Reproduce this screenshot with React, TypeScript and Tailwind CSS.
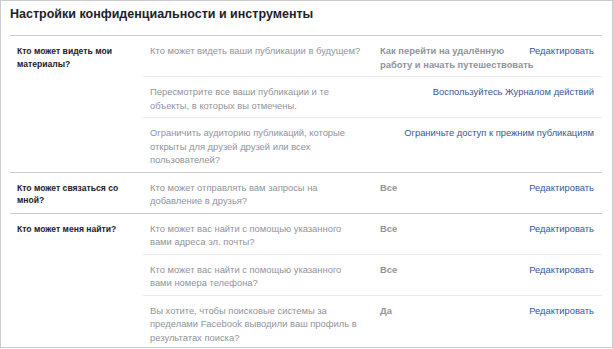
import React from "react";

type Row = {
  q: string;
  value?: string;
  link: string;
};

type Section = {
  label: string;
  rows: Row[];
};

const sections: Section[] = [
  {
    label: "Кто может видеть мои материалы?",
    rows: [
      {
        q: "Кто может видеть ваши публикации в будущем?",
        value: "Как перейти на удалённую работу и начать путешествовать",
        link: "Редактировать",
      },
      {
        q: "Пересмотрите все ваши публикации и те объекты, в которых вы отмечены.",
        link: "Воспользуйтесь Журналом действий",
      },
      {
        q: "Ограничить аудиторию публикаций, которые открыты для друзей друзей или всех пользователей?",
        link: "Ограничьте доступ к прежним публикациям",
      },
    ],
  },
  {
    label: "Кто может связаться со мной?",
    rows: [
      {
        q: "Кто может отправлять вам запросы на добавление в друзья?",
        value: "Все",
        link: "Редактировать",
      },
    ],
  },
  {
    label: "Кто может меня найти?",
    rows: [
      {
        q: "Кто может вас найти с помощью указанного вами адреса эл. почты?",
        value: "Все",
        link: "Редактировать",
      },
      {
        q: "Кто может вас найти с помощью указанного вами номера телефона?",
        value: "Все",
        link: "Редактировать",
      },
      {
        q: "Вы хотите, чтобы поисковые системы за пределами Facebook выводили ваш профиль в результатах поиска?",
        value: "Да",
        link: "Редактировать",
      },
    ],
  },
];

export default function App() {
  return (
    <div
      className="box-border h-[348px] w-[613px] overflow-hidden border border-[#cccccc] bg-white pl-[9px] pr-[10px]"
      style={{ fontFamily: '"Liberation Sans", Arial, Helvetica, sans-serif' }}
    >
      <div className="box-border h-[35px] border-b border-[#cccccc] pt-[3px] text-[12.5px] font-bold leading-[20px] text-[#1d2129]">
        Настройки конфиденциальности и инструменты
      </div>
      {sections.map((s, si) => (
        <div
          key={si}
          className={`flex ${si < sections.length - 1 ? "border-b border-[#cccccc]" : ""}`}
        >
          <div className="w-[133px] shrink-0 pl-[7px] pr-[6px] pt-[9px] text-[8.6px] font-bold leading-[12.5px] text-[#1d2129]">
            {s.label}
          </div>
          <div className="flex flex-1 flex-col">
            {s.rows.map((r, ri) => (
              <div
                key={ri}
                className={`flex pb-[5px] pl-[7px] pr-[8px] pt-[8px] text-[9.4px] leading-[13.5px] ${
                  ri > 0 ? "border-t border-[#e9ebee]" : ""
                }`}
              >
                <div className="mr-[19px] w-[211px] shrink-0 text-[#90949c]">{r.q}</div>
                <div className="flex-1">
                  <span className="float-right text-[#365899]">{r.link}</span>
                  {r.value && <span className="font-bold text-[#90949c]">{r.value}</span>}
                </div>
              </div>
            ))}
          </div>
        </div>
      ))}
    </div>
  );
}
